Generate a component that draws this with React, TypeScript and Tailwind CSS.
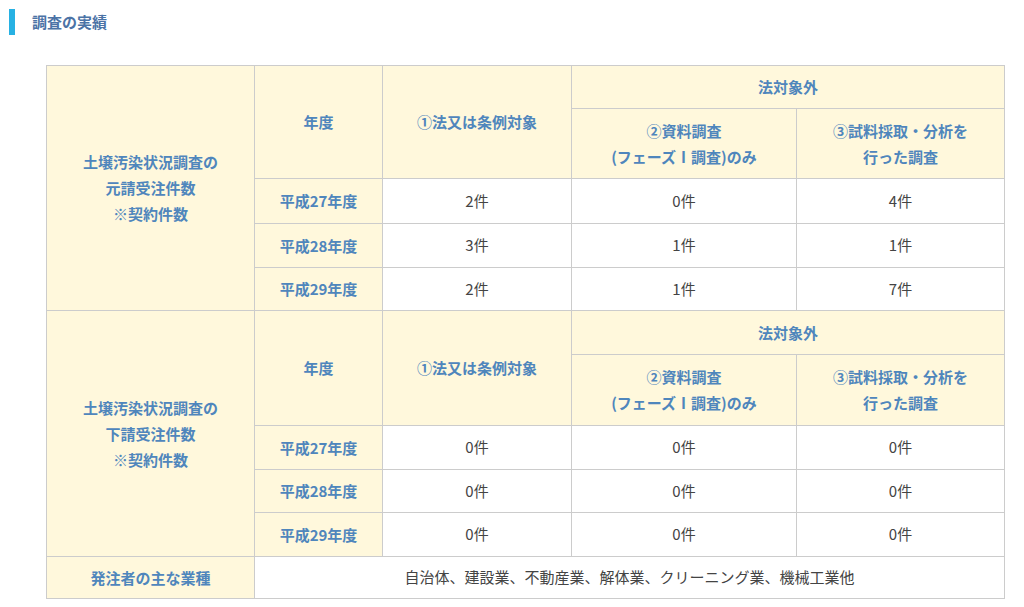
// Survey results table (調査の実績)

const th = "border border-[#cccccc] bg-[#fff8dc] text-[#4f86bc] font-bold text-center align-middle leading-[26px]";
const td = "border border-[#cccccc] bg-white text-[#444444] text-center align-middle";

type Block = {
  label: string[];
  first: string;
  second: string;
  rows: { year: string; a: string; b: string; c: string; h: string }[];
};

const BLOCKS: Block[] = [
  {
    label: ["土壌汚染状況調査の", "元請受注件数", "※契約件数"],
    first: "h-[43px]",
    second: "h-[70px]",
    rows: [
      { year: "平成27年度", a: "2件", b: "0件", c: "4件", h: "h-[45px]" },
      { year: "平成28年度", a: "3件", b: "1件", c: "1件", h: "h-[44px]" },
      { year: "平成29年度", a: "2件", b: "1件", c: "7件", h: "h-[43px]" },
    ],
  },
  {
    label: ["土壌汚染状況調査の", "下請受注件数", "※契約件数"],
    first: "h-[44px]",
    second: "h-[71px]",
    rows: [
      { year: "平成27年度", a: "0件", b: "0件", c: "0件", h: "h-[44px]" },
      { year: "平成28年度", a: "0件", b: "0件", c: "0件", h: "h-[43px]" },
      { year: "平成29年度", a: "0件", b: "0件", c: "0件", h: "h-[44px]" },
    ],
  },
];

function BlockRows({ block }: { block: Block }) {
  return (
    <>
      <tr className={block.first}>
        <th rowSpan={5} className={th}>
          {block.label.map((l) => <div key={l}>{l}</div>)}
        </th>
        <th rowSpan={2} className={th}>年度</th>
        <th rowSpan={2} className={th}>①法又は条例対象</th>
        <th colSpan={2} className={th}>法対象外</th>
      </tr>
      <tr className={block.second}>
        <th className={th}>
          <div>②資料調査</div>
          <div>(フェーズⅠ調査)のみ</div>
        </th>
        <th className={th}>
          <div>③試料採取・分析を</div>
          <div>行った調査</div>
        </th>
      </tr>
      {block.rows.map((r) => (
        <tr key={r.year} className={r.h}>
          <th className={th}>{r.year}</th>
          <td className={td}>{r.a}</td>
          <td className={td}>{r.b}</td>
          <td className={td}>{r.c}</td>
        </tr>
      ))}
    </>
  );
}

export default function App() {
  return (
    <div className="min-h-screen bg-white font-['Noto_Sans_CJK_JP','Noto_Sans',sans-serif] text-[15px]">
      <div className="flex items-center gap-[17px] pl-[9px] pt-[9px]">
        <span className="w-[6px] h-[26px] bg-[#27b1e3]" />
        <h2 className="text-[15px] font-bold text-[#4b73a6]">調査の実績</h2>
      </div>
      <div className="pl-[46px] pt-[30px]">
        <table className="border-collapse w-[958px] table-fixed">
          <colgroup>
            <col className="w-[208px]" />
            <col className="w-[128px]" />
            <col className="w-[189px]" />
            <col className="w-[225px]" />
            <col className="w-[208px]" />
          </colgroup>
          <tbody>
            {BLOCKS.map((b, i) => <BlockRows key={i} block={b} />)}
            <tr className="h-[42px]">
              <th className={th}>発注者の主な業種</th>
              <td colSpan={4} className={td}>
                自治体、建設業、不動産業、解体業、クリーニング業、機械工業他
              </td>
            </tr>
          </tbody>
        </table>
      </div>
    </div>
  );
}
